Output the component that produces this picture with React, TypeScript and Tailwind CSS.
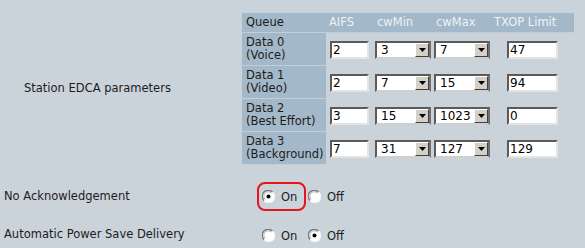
import React from 'react';

const font = { fontFamily: '"DejaVu Sans", Verdana, sans-serif' };

/** classic sunken text box */
function TextBox({ value, w }: { value: string; w: string }) {
  return (
    <div
      className={`${w} h-[18px] bg-white border-2 border-t-[#5a5a5a] border-l-[#5a5a5a] border-r-[#e4e4e4] border-b-[#e4e4e4] flex items-center pl-[1px] text-[12px] text-black leading-none`}
    >
      {value}
    </div>
  );
}

/** classic windows-style dropdown */
function Dropdown({ value }: { value: string }) {
  return (
    <div className="w-[56px] h-[18px] bg-white border-2 border-t-[#5a5a5a] border-l-[#5a5a5a] border-r-[#707070] border-b-[#cfcfcf] flex items-center justify-between text-[12px] text-black leading-none">
      <span className="pl-[4px]">{value}</span>
      <span className="w-[14px] h-[14px] bg-[#d4d0c8] border border-t-white border-l-white border-r-[#404040] border-b-[#404040] flex items-center justify-center">
        <svg width="7" height="4" viewBox="0 0 7 4">
          <path d="M0 0h7L3.5 4z" fill="#000" />
        </svg>
      </span>
    </div>
  );
}

function Radio({ checked }: { checked?: boolean }) {
  return (
    <svg width="13" height="13" viewBox="0 0 13 13" className="shrink-0">
      <circle cx="6.5" cy="6.5" r="6" fill="#fff" />
      <path d="M2 10.5A5.5 5.5 0 0 1 10.5 2" stroke="#7a7a7a" strokeWidth="1.3" fill="none" />
      <path d="M3.1 9.4A4 4 0 0 1 9.4 3.1" stroke="#b0b0b0" strokeWidth="1" fill="none" />
      <path d="M11 2.5A5.5 5.5 0 0 1 2.5 11" stroke="#f4f4f4" strokeWidth="1.2" fill="none" />
      {checked && <circle cx="6.5" cy="6.5" r="2" fill="#000" />}
    </svg>
  );
}

const rows = [
  { q: 'Data 0', sub: '(Voice)', aifs: '2', min: '3', max: '7', txop: '47' },
  { q: 'Data 1', sub: '(Video)', aifs: '2', min: '7', max: '15', txop: '94' },
  { q: 'Data 2', sub: '(Best Effort)', aifs: '3', min: '15', max: '1023', txop: '0' },
  { q: 'Data 3', sub: '(Background)', aifs: '7', min: '31', max: '127', txop: '129' },
];

export default function App() {
  return (
    <div className="w-[585px] h-[248px] bg-[#cad2da] text-[11.5px] text-[#1c1c1c] overflow-hidden" style={font}>
      {/* EDCA block */}
      <div className="flex pt-[13px]">
        <div className="w-[242px] flex items-center pl-[24px]">Station EDCA parameters</div>
        <div className="w-[332px]">
          <div className="flex h-[20px] items-center bg-[#a3b8c8] border-b border-[#c3ced8]">
            <div className="w-[84px] pl-[4px]">Queue</div>
            <div className="w-[47px] pl-[3px] text-[#eef2f5]">AIFS</div>
            <div className="w-[59px] pl-[4px] text-[#eef2f5]">cwMin</div>
            <div className="w-[59px] pl-[4px] text-[#eef2f5]">cwMax</div>
            <div className="pl-[3px] text-[#eef2f5]">TXOP Limit</div>
          </div>
          {rows.map((r) => (
            <div key={r.q} className="flex h-[33px] items-center">
              <div className="w-[84px] h-full bg-[#a3b8c8] border-b border-[#c3ced8] pl-[4px] flex flex-col justify-center leading-[13px]">
                <span>{r.q}</span>
                <span>{r.sub}</span>
              </div>
              <div className="w-[47px] pl-[4px]">
                <TextBox value={r.aifs} w="w-[39px]" />
              </div>
              <div className="w-[59px] pl-[2px]">
                <Dropdown value={r.min} />
              </div>
              <div className="w-[59px] pl-[2px]">
                <Dropdown value={r.max} />
              </div>
              <div className="pl-[16px]">
                <TextBox value={r.txop} w="w-[51px]" />
              </div>
            </div>
          ))}
        </div>
      </div>

      {/* No Acknowledgement */}
      <div className="flex items-center mt-[17px] h-[29px]">
        <div className="w-[257px] pl-[4px]">No Acknowledgement</div>
        <div className="flex items-center">
          <div className="w-[49px] h-[29px] border-2 border-[#e8141c] rounded-[8px] flex items-center pl-[3px] gap-[6px]">
            <Radio checked />
            <span className="mt-[3px]">On</span>
          </div>
          <div className="flex items-center pl-[2px] gap-[6px]">
            <Radio />
            <span className="mt-[3px]">Off</span>
          </div>
        </div>
      </div>

      {/* Automatic Power Save Delivery */}
      <div className="flex items-center mt-[14px] h-[20px]">
        <div className="w-[262px] pl-[4px]">Automatic Power Save Delivery</div>
        <div className="flex items-center gap-[6px]">
          <Radio />
          <span className="mt-[3px] w-[21px]">On</span>
          <Radio checked />
          <span className="mt-[3px]">Off</span>
        </div>
      </div>
    </div>
  );
}
